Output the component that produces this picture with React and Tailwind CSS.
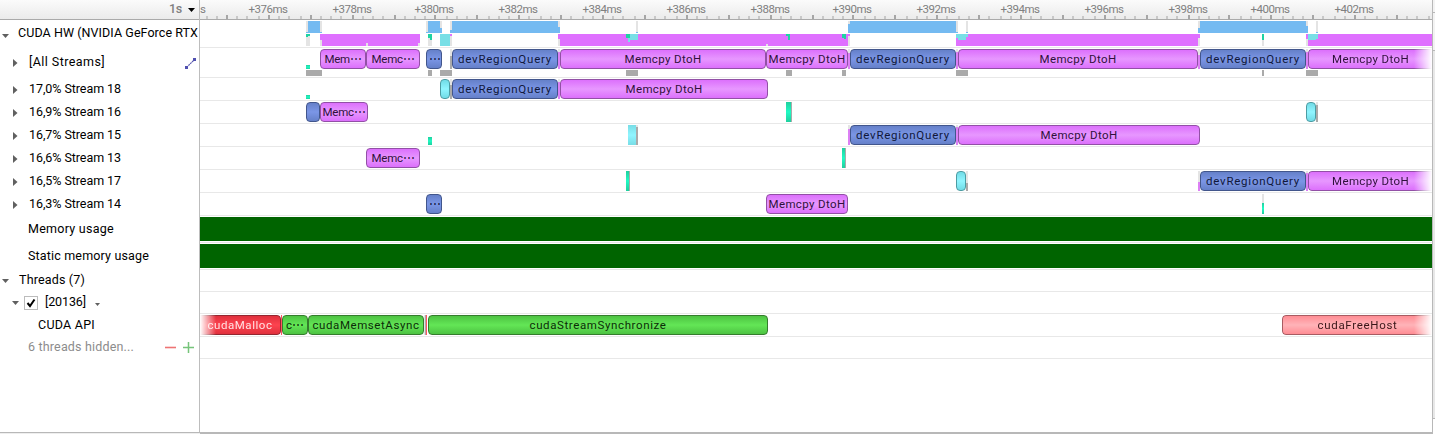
import { useLayoutEffect, useRef, useState } from "react";

const ORIGIN = 200;

// Text whose tracking is adjusted so that it fills the given width.
function Fit({ children, width, className = "" }) {
  const ref = useRef(null);
  const [tracking, setTracking] = useState(0);
  useLayoutEffect(() => {
    const natural = ref.current.getBoundingClientRect().width;
    setTracking((width - natural) / children.length);
  }, []);
  return (
    <span ref={ref} className={`inline-block whitespace-pre ${className}`} style={{ letterSpacing: tracking + "px" }}>
      {children}
    </span>
  );
}

const KIND = {
  blue: "border-[#42568c] text-[#10183a] bg-[linear-gradient(#6580c9,#7b96e6_50%,#6580c9)]",
  pink: "border-[#9250a6] text-[#30103c] bg-[linear-gradient(#dc70fc,#e797ff_50%,#dc70fc)]",
  teal: "border-[#4c9ca3] text-black bg-[linear-gradient(#70dbe6,#90f5ff_50%,#70dbe6)]",
  green: "border-[#357c2d] text-[#0c2c08] bg-[linear-gradient(#4dc342,#63e656_50%,#4dc342)]",
  red: "border-[#932730] text-[#ffe0e2] bg-[linear-gradient(#e0303d,#fd434f_50%,#e0303d)]",
  rose: "border-[#a85c62] text-[#3a1618] bg-[linear-gradient(#ff8d94,#ffb3b8_50%,#ff8d94)]",
};

const PAINT = {
  light: "bg-[#e4e4e4]",
  gray: "bg-[#aaaaaa]",
  sky: "bg-[#74baf1]",
  magenta: "bg-[#df70ff]",
  aqua: "bg-[#78dfe6]",
  mint: "bg-[#1fd3a3]",
  mintbar: "bg-[linear-gradient(#20cf9e,#20fac4_50%,#20cf9e)]",
  aquabar: "bg-[linear-gradient(#78dde6,#90f5ff_50%,#78dde6)]",
  redline: "bg-[#ff5560]",
  pinkline: "bg-[#dc80f4]",
};

// Event: [kind, start, width, label, labelWidth, fade]
function Event({ e }) {
  const [kind, x, w, label, lw, fade] = e;
  const edge =
    fade === "right"
      ? "rounded-l-[4px] border-r-0 [mask-image:linear-gradient(to_left,transparent,black_18px)]"
      : fade === "left"
        ? "rounded-r-[4px] border-l-0 [mask-image:linear-gradient(to_right,transparent,black_16px)]"
        : "rounded-[4px]";
  return (
    <div
      className={`absolute top-px flex h-5 items-center justify-center overflow-hidden border text-[11.5px] leading-[18px] ${edge} ${KIND[kind]}`}
      style={{ left: x - ORIGIN, width: w }}
    >
      {label && <Fit width={lw} className="-mt-px shrink-0">{label}</Fit>}
    </div>
  );
}

// Mark: [paint, start, top, width, height]
function Mark({ m }) {
  const [paint, x, y, w, h] = m;
  return <i className={`absolute ${PAINT[paint]}`} style={{ left: x - ORIGIN, top: y, width: w, height: h }} />;
}

function Track({ height, marks = [], events = [], children }) {
  return (
    <div className={`relative shrink-0 overflow-hidden border-b border-[#e8e8e8] ${height}`}>
      {marks.map((m, i) => <Mark key={i} m={m} />)}
      {events.map((e, i) => <Event key={i} e={e} />)}
      {children}
    </div>
  );
}

const edgeGap = (x, split = 4) => [["light", x, 1, 2, split], ["pinkline", x, 1 + split, 2, 20 - split]];

const overview = [
  ["light", 306, 1, 2, 11], ["sky", 306, 12, 2, 1], ["sky", 308, 1, 12, 12], ["light", 320, 1, 2, 11], ["sky", 320, 12, 2, 1],
  ["light", 306, 14, 4, 12], ["mint", 306, 14, 4, 2], ["mint", 306, 14, 2, 3],
  ["magenta", 320, 14, 2, 6], ["light", 320, 20, 2, 6], ["magenta", 322, 14, 98, 12], ["light", 366, 23, 2, 3], ["light", 418, 23, 2, 3],
  ["light", 426, 1, 2, 11], ["sky", 426, 12, 2, 1], ["sky", 428, 1, 12, 12], ["light", 440, 1, 2, 7], ["sky", 440, 8, 2, 5],
  ["light", 428, 14, 4, 12], ["mint", 428, 14, 4, 4], ["mint", 430, 14, 2, 6],
  ["aqua", 440, 14, 12, 12], ["light", 450, 16, 2, 10], ["magenta", 450, 14, 2, 2],
  ["light", 450, 1, 2, 9], ["sky", 450, 10, 2, 3], ["sky", 452, 1, 106, 12], ["light", 558, 1, 2, 6], ["sky", 558, 7, 2, 6],
  ["magenta", 558, 14, 2, 5], ["light", 558, 19, 2, 7], ["magenta", 560, 14, 288, 12], ["light", 766, 24, 2, 2],
  ["aqua", 628, 14, 10, 6], ["aqua", 628, 14, 2, 8], ["mint", 626, 14, 4, 4], ["light", 636, 1, 2, 11], ["sky", 636, 12, 2, 1],
  ["mint", 786, 14, 4, 2], ["mint", 788, 14, 2, 6], ["mint", 842, 14, 4, 4], ["mint", 844, 14, 2, 5],
  ["magenta", 848, 14, 2, 2], ["light", 848, 16, 2, 10],
  ["light", 848, 1, 2, 3], ["sky", 848, 4, 2, 9], ["sky", 850, 1, 106, 12], ["light", 956, 1, 2, 11], ["sky", 956, 12, 2, 1],
  ["light", 966, 1, 2, 11], ["sky", 966, 12, 2, 1],
  ["magenta", 956, 14, 242, 12], ["aqua", 956, 14, 12, 3], ["aqua", 956, 14, 2, 4], ["aqua", 958, 14, 8, 6],
  ["magenta", 1198, 14, 2, 4], ["light", 1198, 18, 2, 8],
  ["light", 1198, 1, 2, 7], ["sky", 1198, 8, 2, 5], ["sky", 1200, 1, 106, 12], ["light", 1306, 1, 2, 5], ["sky", 1306, 6, 2, 7],
  ["light", 1262, 14, 2, 12], ["mint", 1262, 14, 2, 6], ["light", 1316, 1, 2, 11], ["sky", 1316, 12, 2, 1],
  ["magenta", 1306, 14, 2, 5], ["light", 1306, 19, 2, 7], ["magenta", 1308, 14, 124, 12],
  ["aqua", 1308, 14, 8, 6], ["aqua", 1316, 14, 2, 5],
];

const DEV = "devRegionQuery";
const CPY = "Memcpy DtoH";

const allStreams = {
  events: [
    ["pink", 320, 46, "Mem⋯", 37], ["pink", 366, 54, "Memc⋯", 43], ["blue", 426, 16, "⋯", 10],
    ["blue", 452, 106, DEV, 94], ["pink", 560, 206, CPY, 77], ["pink", 766, 82, CPY, 77],
    ["blue", 850, 106, DEV, 94], ["pink", 958, 240, CPY, 77], ["blue", 1200, 106, DEV, 94],
    ["pink", 1308, 124, CPY, 77, "right"],
  ],
  marks: [
    ["mintbar", 306, 17, 4, 4], ["light", 450, 1, 2, 7], ["gray", 450, 8, 2, 13],
    ...edgeGap(558, 3), ...edgeGap(848), ...edgeGap(956, 3), ...edgeGap(1198, 6), ...edgeGap(1306, 3),
    ["gray", 306, 22, 16, 6], ["gray", 428, 22, 4, 6], ["gray", 440, 22, 12, 6], ["gray", 626, 22, 12, 6],
    ["gray", 786, 22, 6, 6], ["gray", 842, 22, 4, 6], ["gray", 956, 22, 12, 6], ["gray", 1262, 22, 2, 6],
    ["gray", 1306, 22, 12, 6],
  ],
};

const streams = [
  {
    name: "17,0% Stream 18",
    events: [["teal", 440, 10], ["blue", 452, 106, DEV, 94], ["pink", 560, 208, CPY, 77]],
    marks: [["mintbar", 306, 17, 4, 4], ["light", 450, 1, 2, 6], ["gray", 450, 7, 2, 14], ...edgeGap(558, 3)],
  },
  {
    name: "16,9% Stream 16",
    events: [["blue", 306, 14], ["pink", 320, 48, "Memc⋯", 43], ["teal", 1306, 10]],
    marks: [["mintbar", 786, 1, 6, 20], ["gray", 791, 1, 1, 20], ["light", 1316, 1, 2, 3], ["gray", 1316, 4, 2, 17]],
  },
  {
    name: "16,7% Stream 15",
    events: [["blue", 850, 106, DEV, 94], ["pink", 958, 242, CPY, 77]],
    marks: [
      ["mintbar", 428, 13, 4, 8], ["aquabar", 628, 1, 8, 20], ["light", 636, 1, 2, 2], ["gray", 636, 3, 2, 18],
      ...edgeGap(848), ...edgeGap(956, 2),
    ],
  },
  {
    name: "16,6% Stream 13",
    events: [["pink", 366, 54, "Memc⋯", 43]],
    marks: [["mintbar", 842, 1, 4, 20], ["gray", 845, 1, 1, 20]],
  },
  {
    name: "16,5% Stream 17",
    events: [["teal", 956, 10], ["blue", 1200, 106, DEV, 94], ["pink", 1308, 124, CPY, 77, "right"]],
    marks: [
      ["mintbar", 626, 1, 4, 20], ["gray", 629, 1, 1, 20], ["light", 966, 1, 2, 12], ["gray", 966, 13, 2, 8],
      ...edgeGap(1198, 11), ...edgeGap(1306, 2),
    ],
  },
  {
    name: "16,3% Stream 14",
    events: [["blue", 426, 16, "⋯", 10], ["pink", 766, 82, CPY, 77]],
    marks: [["light", 1262, 1, 2, 9], ["mintbar", 1262, 10, 2, 11]],
  },
];

const api = {
  events: [
    ["red", 200, 81, "cudaMalloc", 65, "left"], ["green", 282, 26, "c⋯", 18], ["green", 308, 116, "cudaMemsetAsync", 107],
    ["green", 428, 340, "cudaStreamSynchronize", 137], ["rose", 1282, 150, "cudaFreeHost", 80, "right"],
  ],
  marks: [["redline", 281, 1, 1, 20], ["light", 424, 1, 1, 20], ["gray", 425, 1, 1, 20], ["redline", 426, 1, 1, 20]],
};

const STEP = 10.447;
const ticks = Array.from({ length: 119 }, (_, i) => i - 2)
  .map((i) => ({ major: i % 4 === 0, x: 2 * Math.round((226 + i * STEP) / 2) }))
  .filter((t) => t.x >= 200 && t.x < 1430);
const times = Array.from({ length: 14 }, (_, i) => ({
  text: `+${376 + 2 * i}ms`,
  x: 2 * Math.round((226 + (4 + 8 * i) * STEP) / 2),
}));

function Ruler() {
  return (
    <div className="relative h-5 shrink-0 overflow-hidden border-b border-[#aaaaaa] bg-linear-to-b from-[#fbfbfb] to-[#ebebeb] text-[11.5px] leading-[18px] text-[#808080]">
      <span className="absolute left-0 top-0">s</span>
      {times.map((t) => (
        <span key={t.text} className="absolute top-0 flex w-[60px] justify-center" style={{ left: t.x - 30 - ORIGIN }}>
          <Fit width={39}>{t.text}</Fit>
        </span>
      ))}
      {ticks.map((t) => (
        <i
          key={t.x}
          className={`absolute bottom-0 w-0.5 ${t.major ? "h-1 bg-[#a6a6a6]" : "h-[3px] bg-[#c8c8c8]"}`}
          style={{ left: t.x - ORIGIN }}
        />
      ))}
    </div>
  );
}

function Right() {
  return (
    <svg className="mt-0.5 h-2 w-[5px] shrink-0" viewBox="0 0 5 8">
      <path d="M0 0L4.5 4L0 8Z" fill="#606060" />
    </svg>
  );
}

function Down({ small, color = "#606060" }) {
  return (
    <svg className={`shrink-0 ${small ? "h-[3px] w-[5px]" : "h-1 w-[7px]"}`} viewBox="0 0 7 4">
      <path d="M0 0H7L3.5 4Z" fill={color} />
    </svg>
  );
}

function Sidebar() {
  return (
    <div className="flex w-[200px] shrink-0 flex-col overflow-hidden border-r border-[#bdbdbd] text-[12.5px] leading-4">
      <div className="flex h-5 shrink-0 items-center justify-end gap-1.5 border-b border-[#aaaaaa] bg-linear-to-b from-[#fbfbfb] to-[#ebebeb] pr-1 text-[#808080]">
        <Fit width={13} className="-mt-px font-medium">1s</Fit>
        <Down color="#000000" />
      </div>
      <div className="flex h-7 shrink-0 items-center pl-0.5">
        <span className="flex pt-1"><Down /></span>
        <Fit width={180} className="ml-[9px] -mt-0.5 shrink-0">CUDA HW (NVIDIA GeForce RTX</Fit>
      </div>
      <div className="flex h-[30px] shrink-0 items-center pb-0.5 pl-[13px]">
        <Right />
        <Fit width={76} className="ml-[11px] -mt-px">[All Streams]</Fit>
        <svg className="ml-auto mr-[3px] mt-0.5 h-[11px] w-[11px]" viewBox="0 0 11 11">
          <path d="M1.5 9.5L9.5 1.5" stroke="#5c5cb0" strokeWidth="1.2" strokeDasharray="2 .6" />
          <path d="M0 8H3V11H0ZM8 0H11V3H8Z" fill="#5050b0" />
        </svg>
      </div>
      {streams.map((s) => (
        <div key={s.name} className="flex h-[23px] shrink-0 items-center pb-px pl-[13px]">
          <Right />
          <Fit width={92} className="ml-[11px] -mt-px">{s.name}</Fit>
        </div>
      ))}
      <div className="flex h-[27px] shrink-0 items-center pl-7">
        <Fit width={86} className="-mt-px">Memory usage</Fit>
      </div>
      <div className="flex h-[27px] shrink-0 items-center pl-7">
        <Fit width={121} className="-mt-px">Static memory usage</Fit>
      </div>
      <div className="flex h-[22px] shrink-0 items-center pl-0.5">
        <Down />
        <Fit width={66} className="ml-2.5 -mt-0.5">Threads (7)</Fit>
      </div>
      <div className="flex h-[22px] shrink-0 items-center pl-3">
        <Down />
        <span className="ml-[5px] flex h-[14px] w-[14px] items-center justify-center border border-[#bcbcbc] bg-white">
          <svg className="h-2.5 w-2.5" viewBox="0 0 10 10">
            <path d="M1.5 5L4 8L8.5 1.5" fill="none" stroke="black" strokeWidth="2" />
          </svg>
        </span>
        <Fit width={41} className="ml-[7px] -mt-0.5">[20136]</Fit>
        <span className="ml-[9px] flex pt-0.5"><Down small /></span>
      </div>
      <div className="flex h-[23px] shrink-0 items-center pl-[38px]">
        <Fit width={57} className="-mt-0.5">CUDA API</Fit>
      </div>
      <div className="flex h-[22px] shrink-0 items-center pl-7 text-[#8c8c8c]">
        <Fit width={106} className="-mt-0.5">6 threads hidden...</Fit>
        <svg className="-mt-px ml-auto mr-[5px] h-[11px] w-[29px]" viewBox="0 0 29 11">
          <path d="M0 5.5H11" stroke="#ee7474" strokeWidth="1.6" />
          <path d="M18 5.5H29M23.5 0V11" stroke="#76c47a" strokeWidth="1.5" />
        </svg>
      </div>
    </div>
  );
}

export default function App() {
  return (
    <div className="flex h-[434px] w-[1435px] flex-col overflow-hidden bg-white font-[Roboto,'Liberation_Sans',sans-serif] text-black">
      <div className="flex h-[432px] shrink-0">
        <Sidebar />
        <div className="flex w-[1232px] shrink-0 flex-col overflow-hidden">
          <Ruler />
          <Track height="h-7" marks={overview} />
          <Track height="h-[30px]" {...allStreams} />
          {streams.map((s) => <Track key={s.name} height="h-[23px]" marks={s.marks} events={s.events} />)}
          <Track height="h-[27px]"><div className="mt-px h-6 bg-[#006400]" /></Track>
          <Track height="h-[27px]"><div className="mt-px h-6 bg-[#006400]" /></Track>
          <Track height="h-[22px]" />
          <Track height="h-[22px]" />
          <Track height="h-[23px]" {...api} />
          <Track height="h-[22px]" />
        </div>
        <div className="flex w-[3px] flex-col border-l border-[#b8b8b8]">
          <div className="h-[13px] border-b border-[#b8b8b8] bg-[#f3f3f3]" />
          <div className="h-[38px] border-b border-[#b8b8b8] bg-[#f3f3f3]" />
          <div className="h-[368px] border-b border-[#b8b8b8] bg-[#e8e8e8]" />
        </div>
      </div>
      <div className="flex h-0.5 shrink-0">
        <div className="w-[200px] border-t border-[#b8b8b8] bg-[#eeeeee]" />
        <div className="w-[1233px] bg-[#b8b8b8]" />
      </div>
    </div>
  );
}
